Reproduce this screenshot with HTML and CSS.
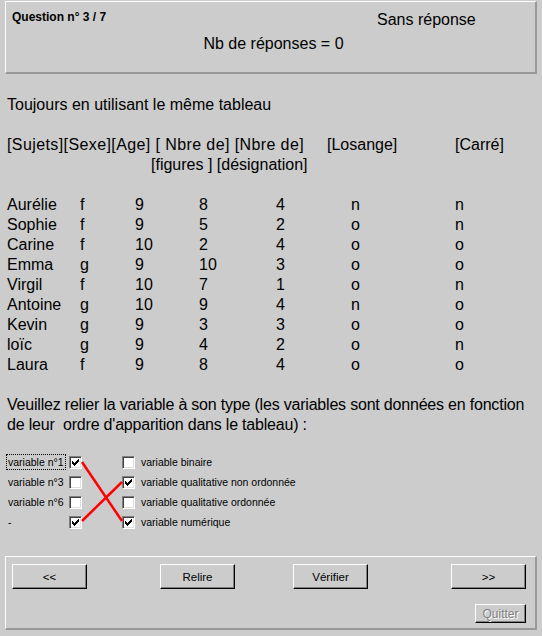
FILE: index.html
```html
<!DOCTYPE html>
<html lang="fr">
  <head>
    <meta charset="UTF-8" />
    <meta name="viewport" content="width=device-width, initial-scale=1.0" />

    <title>Question 3 / 7</title>
    <link rel="stylesheet" href="styles.css">
  </head>

  <body>
    <div id="whole">
      <div class="panel status-box">
        <div class="status-top">
          <span class="question-num">Question n° 3 / 7</span>
          <span class="answer-state">Sans réponse</span>
        </div>
        <div class="answer-count">Nb de réponses = 0</div>
      </div>

      <div class="content">
        <p class="line">Toujours en utilisant le même tableau</p>

        <div class="table-head">
          <div class="head-row">
            <span class="head-main">[Sujets][Sexe][Age] [ Nbre de] [Nbre de]</span>
            <span class="head-los">[Losange]</span>
            <span>[Carré]</span>
          </div>
          <div class="head-sub">[figures ] [désignation]</div>
        </div>

        <div class="data">
          <div class="row"><span>Aurélie</span><span>f</span><span>9</span><span>8</span><span>4</span><span>n</span><span>n</span></div>
          <div class="row"><span>Sophie</span><span>f</span><span>9</span><span>5</span><span>2</span><span>o</span><span>n</span></div>
          <div class="row"><span>Carine</span><span>f</span><span>10</span><span>2</span><span>4</span><span>o</span><span>o</span></div>
          <div class="row"><span>Emma</span><span>g</span><span>9</span><span>10</span><span>3</span><span>o</span><span>o</span></div>
          <div class="row"><span>Virgil</span><span>f</span><span>10</span><span>7</span><span>1</span><span>o</span><span>n</span></div>
          <div class="row"><span>Antoine</span><span>g</span><span>10</span><span>9</span><span>4</span><span>n</span><span>o</span></div>
          <div class="row"><span>Kevin</span><span>g</span><span>9</span><span>3</span><span>3</span><span>o</span><span>o</span></div>
          <div class="row"><span>loïc</span><span>g</span><span>9</span><span>4</span><span>2</span><span>o</span><span>n</span></div>
          <div class="row"><span>Laura</span><span>f</span><span>9</span><span>8</span><span>4</span><span>o</span><span>o</span></div>
        </div>

        <p class="line instructions">Veuillez relier la variable à son type (les variables sont données en fonction<br>de leur&nbsp; ordre d'apparition dans le tableau) :</p>
      </div>

      <div class="match">
        <div class="match-grid">
          <span class="var-name"><span class="focus">variable n°1</span></span>
          <span class="box checked"><svg width="11" height="11" viewBox="0 0 11 11"><path d="M2 4h1v3h-1z M3 5h1v3h-1z M4 6h1v3h-1z M5 5h1v3h-1z M6 4h1v3h-1z M7 3h1v3h-1z M8 2h1v3h-1z" fill="#000" shape-rendering="crispEdges"/></svg></span>
          <span class="box type-box"></span>
          <span class="type-name">variable binaire</span>

          <span class="var-name">variable n°3</span>
          <span class="box"></span>
          <span class="box type-box"><svg width="11" height="11" viewBox="0 0 11 11"><path d="M2 4h1v3h-1z M3 5h1v3h-1z M4 6h1v3h-1z M5 5h1v3h-1z M6 4h1v3h-1z M7 3h1v3h-1z M8 2h1v3h-1z" fill="#000" shape-rendering="crispEdges"/></svg></span>
          <span class="type-name">variable qualitative non ordonnée</span>

          <span class="var-name">variable n°6</span>
          <span class="box"></span>
          <span class="box type-box"></span>
          <span class="type-name">variable qualitative ordonnée</span>

          <span class="var-name">-</span>
          <span class="box"><svg width="11" height="11" viewBox="0 0 11 11"><path d="M2 4h1v3h-1z M3 5h1v3h-1z M4 6h1v3h-1z M5 5h1v3h-1z M6 4h1v3h-1z M7 3h1v3h-1z M8 2h1v3h-1z" fill="#000" shape-rendering="crispEdges"/></svg></span>
          <span class="box type-box"><svg width="11" height="11" viewBox="0 0 11 11"><path d="M2 4h1v3h-1z M3 5h1v3h-1z M4 6h1v3h-1z M5 5h1v3h-1z M6 4h1v3h-1z M7 3h1v3h-1z M8 2h1v3h-1z" fill="#000" shape-rendering="crispEdges"/></svg></span>
          <span class="type-name">variable numérique</span>
        </div>

        <!-- links drawn between the two columns of boxes -->
        <svg class="links" width="140" height="80" viewBox="0 0 140 80">
          <line x1="77" y1="10" x2="117" y2="69" stroke="#ff0000" stroke-width="2.5" />
          <line x1="77" y1="69" x2="117" y2="30" stroke="#ff0000" stroke-width="2.5" />
        </svg>
      </div>

      <div class="panel nav-box">
        <div class="btn-row">
          <button class="btn">&lt;&lt;</button>
          <button class="btn btn-relire">Relire</button>
          <button class="btn btn-verif">Vérifier</button>
          <button class="btn btn-next">&gt;&gt;</button>
        </div>
        <div class="quit-row">
          <button class="btn btn-quit" disabled>Quitter</button>
        </div>
      </div>
    </div>
  </body>
</html>
```

FILE: styles.css
```css
html {
  background-color: #cccccc;
}

body {
  margin: 0;
  font-family: "Liberation Sans", Arial, sans-serif;
  color: #000;
}

#whole {
  padding: 1px 5px 0;
}

.panel {
  box-sizing: border-box;
  border-style: solid;
  border-width: 1px 2px 2px 1px;
  border-color: #ffffff #999999 #999999 #ffffff;
}

.status-box {
  height: 73px;
  padding: 7px 0 0 6px;
}

.status-top {
  display: flex;
  align-items: flex-start;
}

.question-num {
  width: 365px;
  font-size: 12px;
  font-weight: bold;
  line-height: 16px;
}

.answer-state {
  margin-top: 1px;
  font-size: 16px;
  line-height: 20px;
}

.answer-count {
  margin-top: 4px;
  text-align: center;
  font-size: 16px;
  line-height: 20px;
}

.content {
  padding: 21px 0 0 2px;
  font-size: 16px;
  line-height: 20px;
}

.line {
  margin: 0;
}

.table-head {
  margin-top: 20px;
}

.head-row {
  display: flex;
}

.head-main {
  width: 320px;
  letter-spacing: 0.4px;
}

.head-los {
  width: 128px;
}

.head-sub {
  padding-left: 144px;
}

.data {
  margin-top: 20px;
}

.row {
  display: grid;
  grid-template-columns: 73px 55px 64px 77px 75px 104px auto;
  height: 20px;
}

.instructions {
  margin-top: 20px;
  white-space: nowrap;
  letter-spacing: -0.2px;
}

.match {
  position: relative;
  margin-top: 17px;
  padding-left: 3px;
}

.match-grid {
  display: grid;
  grid-template-columns: 61px 13px 53px 1fr;
  grid-auto-rows: 20px;
  align-items: center;
  font-size: 10.5px;
}

.focus {
  outline: 1px dotted #000;
  outline-offset: 1px;
}

.box {
  width: 13px;
  height: 13px;
  box-sizing: border-box;
  background-color: #fff;
  border: 1px solid;
  border-color: #808080 #ffffff #ffffff #808080;
  box-shadow: inset 1px 1px 0 #404040, inset -1px -1px 0 #dfdfdf;
}

.box svg {
  display: block;
}

.type-box {
  justify-self: end;
}

.type-name {
  padding-left: 6px;
}

.links {
  position: absolute;
  left: 0;
  top: 0;
  pointer-events: none;
}

.nav-box {
  margin-top: 24px;
  height: 74px;
  padding: 7px 9px 0 6px;
}

.btn-row {
  display: flex;
}

.btn {
  width: 75px;
  height: 25px;
  box-sizing: border-box;
  padding: 0;
  font-family: "Liberation Sans", Arial, sans-serif;
  font-size: 11.5px;
  color: #000;
  background-color: #cccccc;
  border: 1px solid;
  border-color: #ffffff #000000 #000000 #ffffff;
  box-shadow: inset -1px -1px 0 #808080;
}

.btn-relire {
  margin-left: 73px;
}

.btn-verif {
  margin-left: 58px;
}

.btn-next {
  margin-left: auto;
}

.quit-row {
  display: flex;
  justify-content: flex-end;
  margin-top: 15px;
}

.btn-quit {
  width: 51px;
  height: 19px;
  font-size: 12px;
  color: #808080;
  text-shadow: 1px 1px 0 #ffffff;
}
```
